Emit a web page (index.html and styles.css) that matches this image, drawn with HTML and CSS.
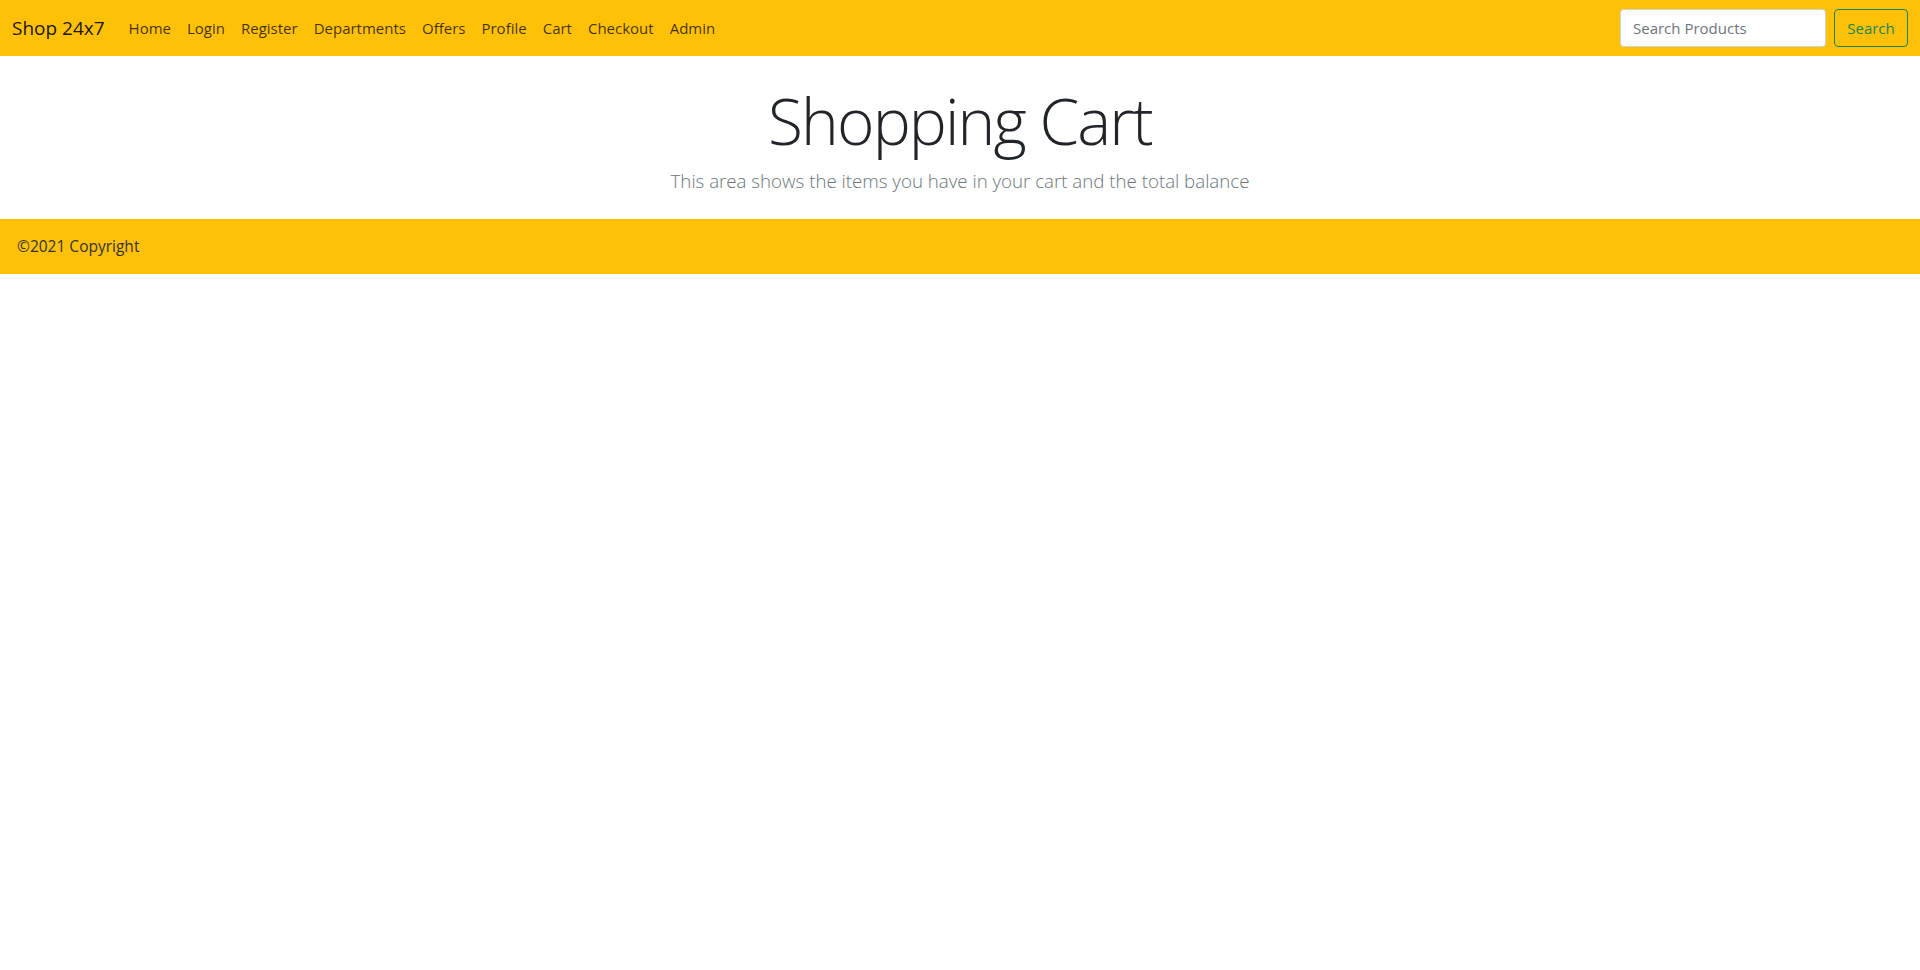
FILE: index.html
```html
<!DOCTYPE html>
<html lang="en">
<head>
<meta charset="utf-8">
<title>Shop 24x7 - Cart</title>
<link rel="stylesheet" href="styles.css">
</head>
<body>
<nav class="navbar">
  <div class="nav-inner">
    <a class="brand" href="#">Shop 24x7</a>
    <ul class="nav-links">
      <li><a href="#">Home</a></li>
      <li><a href="#">Login</a></li>
      <li><a href="#">Register</a></li>
      <li><a href="#">Departments</a></li>
      <li><a href="#">Offers</a></li>
      <li><a href="#">Profile</a></li>
      <li><a href="#">Cart</a></li>
      <li><a href="#">Checkout</a></li>
      <li><a href="#">Admin</a></li>
    </ul>
    <form class="search">
      <input class="search-input" type="search" placeholder="Search Products">
      <button class="search-btn" type="button">Search</button>
    </form>
  </div>
</nav>
<main class="hero">
  <h1 class="hero-title">Shopping Cart</h1>
  <p class="hero-lead">This area shows the items you have in your cart and the total balance</p>
</main>
<footer class="footer">©2021 Copyright</footer>
</body>
</html>
```
FILE: styles.css
```css
* { box-sizing: border-box; }
html, body { margin: 0; padding: 0; }
body {
  font-family: "Open Sans", "Noto Sans", sans-serif;
  font-size: 16px;
  line-height: 1.5;
  color: #212529;
  background: #fff;
}
.navbar {
  background: #ffc107;
  padding: 8px 0;
}
.nav-inner {
  display: flex;
  align-items: center;
  padding: 0 12px;
}
.brand {
  font-size: 19px;
  line-height: 30px;
  padding: 5px 0;
  margin-right: 16px;
  color: rgba(0,0,0,.9);
  text-decoration: none;
}
.nav-links {
  display: flex;
  list-style: none;
  margin: 0;
  padding: 0;
  flex: 1;
}
.nav-links a {
  display: block;
  padding: 8px;
  font-size: 15px;
  color: rgba(0,0,0,.75);
  text-decoration: none;
}
.search {
  display: flex;
  align-items: center;
}
.search-input {
  width: 206px;
  height: 38px;
  margin-right: 8px;
  padding: 6px 12px;
  font: inherit;
  font-size: 15px;
  color: #212529;
  background: #fff;
  border: 1px solid #ced4da;
  border-radius: 4px;
}
.search-input::placeholder { color: #6c757d; }
.search-btn {
  height: 38px;
  width: 74px;
  padding: 6px 10px;
  font: inherit;
  font-size: 15px;
  color: #198754;
  background: transparent;
  border: 1px solid #198754;
  border-radius: 4px;
}
.hero {
  text-align: center;
  padding: 27px 0 24px;
}
.hero-title {
  margin: 0 0 7px;
  font-size: 64px;
  font-weight: 300;
  line-height: 1.2;
  letter-spacing: -1.9px;
}
.hero-lead {
  margin: 0;
  font-size: 18.7px;
  line-height: 28px;
  font-weight: 300;
  color: #6c757d;
}
.footer {
  background: #ffc107;
  padding: 16px 17px;
  font-size: 15.5px;
  line-height: 23px;
  color: #333;
}
```
